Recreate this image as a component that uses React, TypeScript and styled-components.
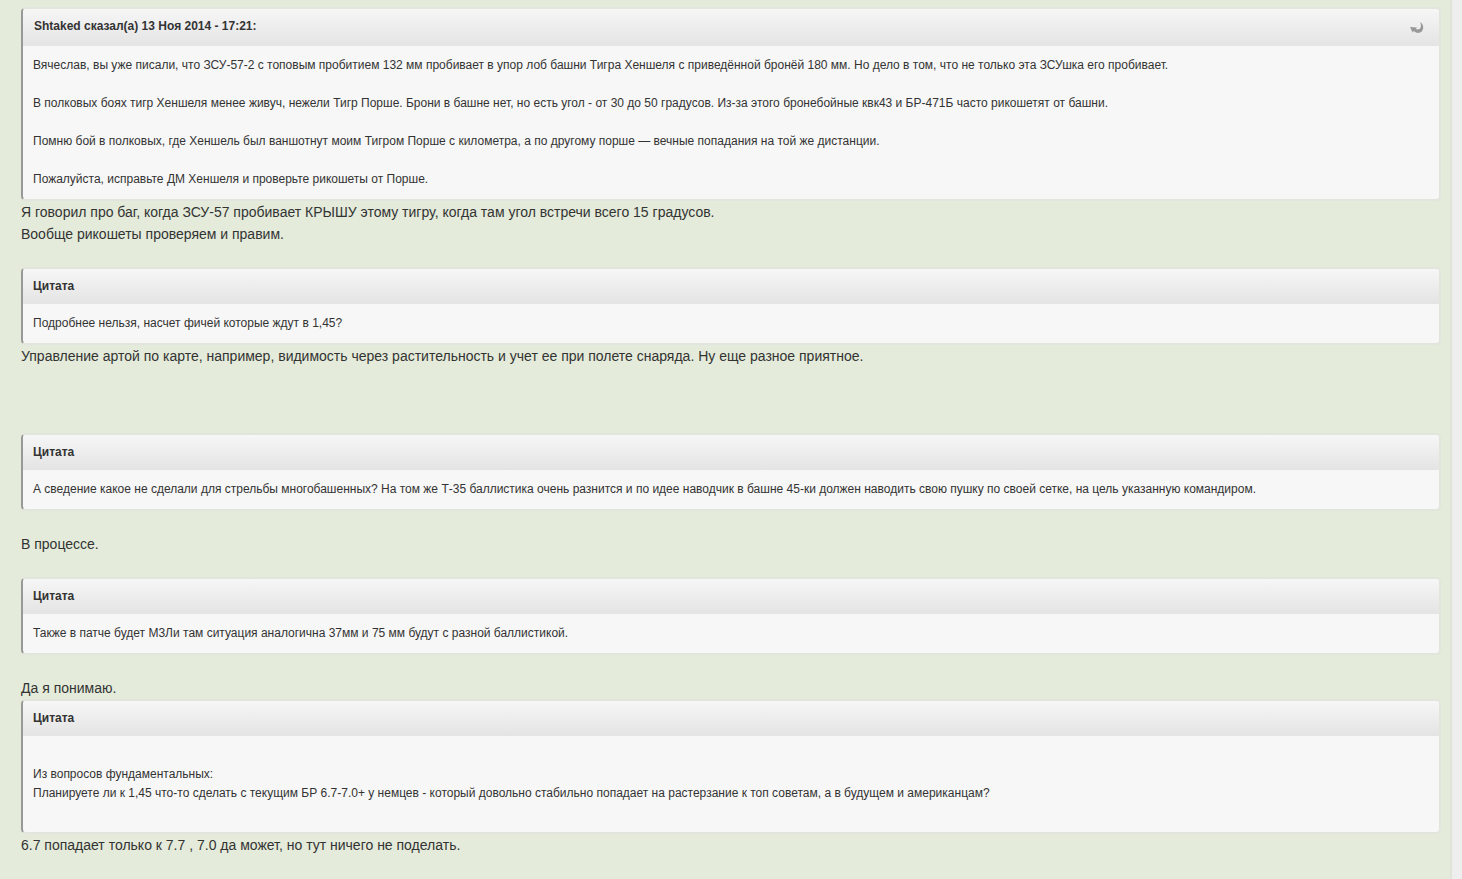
import React from "react";
import styled, { createGlobalStyle } from "styled-components";

const GlobalStyle = createGlobalStyle`
  body {
    margin: 0;
    background: #eeeeee;
    font-family: "Liberation Sans", Arial, sans-serif;
    color: #333333;
  }
`;

const Post = styled.article`
  box-sizing: border-box;
  min-height: 100vh;
  margin-right: 10px;
  padding: 7px 9px 22px 21px;
  border-right: 2px solid #dfe3d8;
  background: #e4ebda;
  font-size: 14px;
  line-height: 22px;
`;

const Reply = styled.p<{ $before?: number; $after?: number }>`
  margin: 0;
  padding: ${({ $before = 0, $after = 0 }) => `${$before * 22}px 0 ${$after * 22}px`};
`;

const QuoteBox = styled.blockquote`
  margin: 0;
  border: 2px solid #e2e5de;
  border-left-color: #989898;
  border-radius: 5px;
  background: #f7f7f7;
  font-size: 12px;
  line-height: 19px;
`;

const QuoteHead = styled.header<{ $linked?: boolean }>`
  display: flex;
  align-items: center;
  justify-content: space-between;
  padding: ${({ $linked }) => ($linked ? "8px 15px 10px 11px" : "8px 10px")};
  border-radius: 3px 3px 0 0;
  background: linear-gradient(#f6f6f6, #e4e4e4);
  font-weight: bold;
`;

const JumpLink = styled.a`
  display: flex;
  padding-top: 3px;
  color: #999999;
`;

const QuoteBody = styled.div<{ $spaced?: boolean }>`
  padding: ${({ $spaced }) => ($spaced ? "29px 10px" : "10px")};
`;

const Line = styled.p`
  margin: 0;
`;

const Paragraph = styled(Line)`
  & + & {
    margin-top: 19px;
  }
`;

function Quote({ children, spaced }: { children: React.ReactNode; spaced?: boolean }) {
  return (
    <QuoteBox>
      <QuoteHead>Цитата</QuoteHead>
      <QuoteBody $spaced={spaced}>{children}</QuoteBody>
    </QuoteBox>
  );
}

export default function App() {
  return (
    <>
      <GlobalStyle />
      <Post>
        <QuoteBox>
          <QuoteHead $linked>
            <span>Shtaked сказал(а) 13 Ноя 2014 - 17:21:</span>
            <JumpLink href="#post" aria-label="Перейти к сообщению">
              <svg width="14" height="12" viewBox="0 0 14 12" aria-hidden="true">
                <path
                  d="M0 5 L7 5.6 L5.8 7 C8 8 10.6 7 10.9 4.4 C11 2.8 10.8 1.4 10.2 0 C12.2 1.2 13.4 3.4 13.2 6 C12.8 11 7.4 12.6 3.8 9 L2.6 10.4 Z"
                  fill="currentColor"
                />
              </svg>
            </JumpLink>
          </QuoteHead>
          <QuoteBody>
            <Paragraph>
              Вячеслав, вы уже писали, что ЗСУ-57-2 с топовым пробитием 132 мм пробивает в упор лоб башни Тигра Хеншеля с
              приведённой бронёй 180 мм. Но дело в том, что не только эта ЗСУшка его пробивает.
            </Paragraph>
            <Paragraph>
              В полковых боях тигр Хеншеля менее живуч, нежели Тигр Порше. Брони в башне нет, но есть угол - от 30 до 50
              градусов. Из-за этого бронебойные квк43 и БР-471Б часто рикошетят от башни.
            </Paragraph>
            <Paragraph>
              Помню бой в полковых, где Хеншель был ваншотнут моим Тигром Порше с километра, а по другому порше — вечные
              попадания на той же дистанции.
            </Paragraph>
            <Paragraph>Пожалуйста, исправьте ДМ Хеншеля и проверьте рикошеты от Порше.</Paragraph>
          </QuoteBody>
        </QuoteBox>
        <Reply $after={1}>
          Я говорил про баг, когда ЗСУ-57 пробивает КРЫШУ этому тигру, когда там угол встречи всего 15 градусов.
          <br />
          Вообще рикошеты проверяем и правим.
        </Reply>
        <Quote>
          <Line>Подробнее нельзя, насчет фичей которые ждут в 1,45?</Line>
        </Quote>
        <Reply $after={3}>
          Управление артой по карте, например, видимость через растительность и учет ее при полете снаряда. Ну еще разное
          приятное.
        </Reply>
        <Quote>
          <Line>
            А сведение какое не сделали для стрельбы многобашенных? На том же Т-35 баллистика очень разнится и по идее
            наводчик в башне 45-ки должен наводить свою пушку по своей сетке, на цель указанную командиром.
          </Line>
        </Quote>
        <Reply $before={1} $after={1}>
          В процессе.
        </Reply>
        <Quote>
          <Line>Также в патче будет М3Ли там ситуация аналогична 37мм и 75 мм будут с разной баллистикой.</Line>
        </Quote>
        <Reply $before={1}>Да я понимаю.</Reply>
        <Quote spaced>
          <Line>Из вопросов фундаментальных:</Line>
          <Line>
            Планируете ли к 1,45 что-то сделать с текущим БР 6.7-7.0+ у немцев - который довольно стабильно попадает на
            растерзание к топ советам, а в будущем и американцам?
          </Line>
        </Quote>
        <Reply>6.7 попадает только к 7.7 , 7.0 да может, но тут ничего не поделать.</Reply>
      </Post>
    </>
  );
}
